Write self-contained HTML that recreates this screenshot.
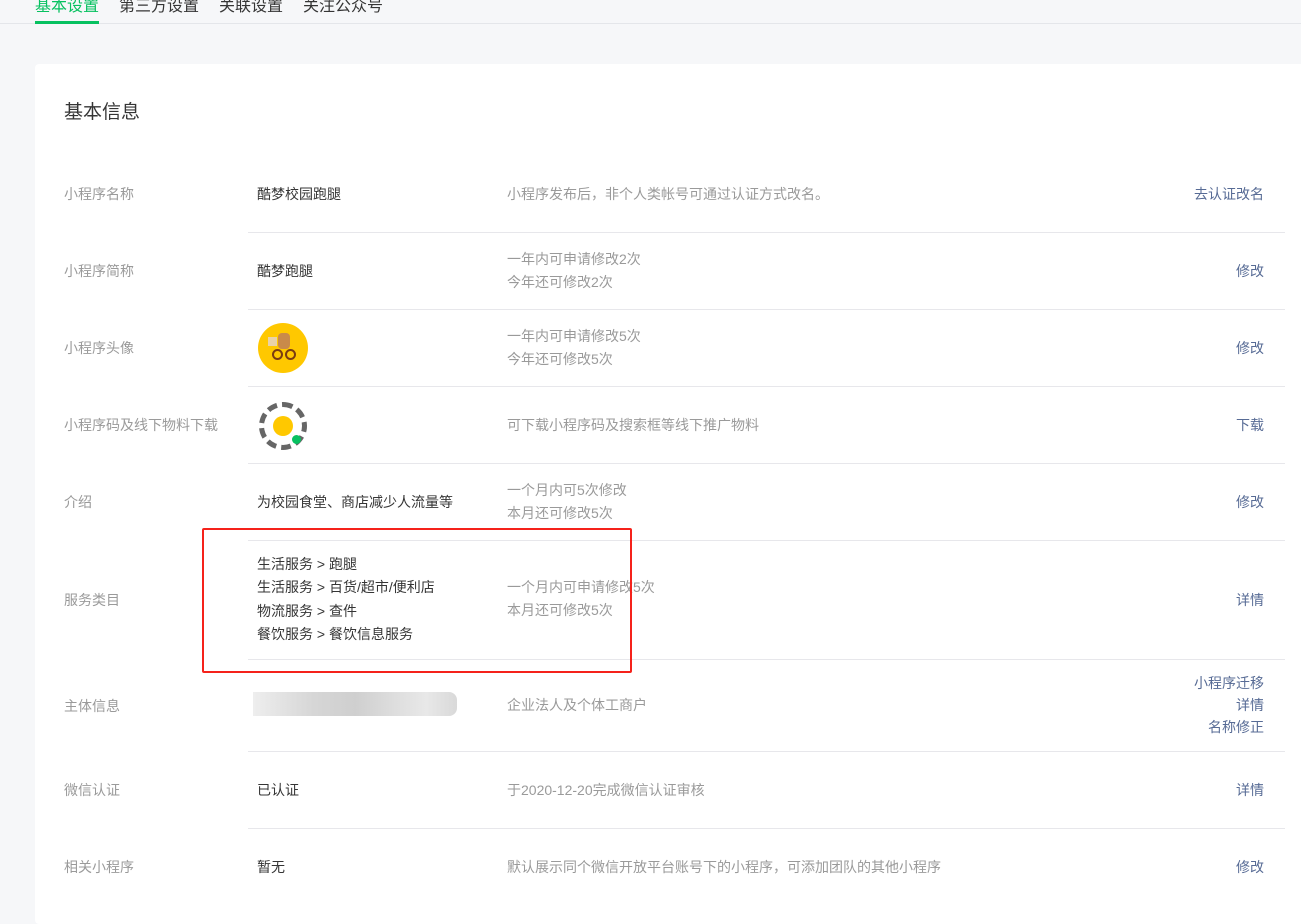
<!DOCTYPE html>
<html><head><meta charset="utf-8"><style>
*{margin:0;padding:0;box-sizing:border-box}
body{width:1301px;height:905px;overflow:hidden;background:#f6f7f9;font-family:"Liberation Sans","Noto Sans CJK SC",sans-serif;font-size:14px;position:relative}
.a{position:absolute;white-space:nowrap}
.tab{top:-4px;font-size:16px;color:#353535;line-height:22px}
.card{position:absolute;left:35px;top:64px;width:1280px;height:860px;background:#fff;border-radius:4px}
.lab{color:#9a9a9a;left:64px;margin-top:-2px}
.val{color:#353535;left:257px;margin-top:-2px}
.desc{color:#9a9a9a;left:507px;line-height:23px}
.lnk{color:#576b95;right:37px;text-align:right;line-height:22px}
.ln{position:absolute;left:248px;width:1037px;height:1px;background:#e7e7eb}
</style></head><body>
<div class="a tab" style="left:35px;color:#07c160">基本设置</div>
<div class="a tab" style="left:119px">第三方设置</div>
<div class="a tab" style="left:219px">关联设置</div>
<div class="a tab" style="left:303px">关注公众号</div>
<div style="position:absolute;left:0;top:23px;width:1301px;height:1px;background:#e4e6ea"></div>
<div style="position:absolute;left:35px;top:21px;width:64px;height:3px;background:#07c160"></div>
<div class="card"></div>
<div class="a" style="left:64px;top:97px;font-size:19px;color:#353535">基本信息</div>

<div class="a lab" style="top:186px">小程序名称</div>
<div class="a val" style="top:186px">酷梦校园跑腿</div>
<div class="a desc" style="top:183px">小程序发布后，非个人类帐号可通过认证方式改名。</div>
<div class="a lnk" style="top:183px">去认证改名</div>
<div class="ln" style="top:232px"></div>

<div class="a lab" style="top:263px">小程序简称</div>
<div class="a val" style="top:263px">酷梦跑腿</div>
<div class="a desc" style="top:248px">一年内可申请修改2次<br>今年还可修改2次</div>
<div class="a lnk" style="top:260px">修改</div>
<div class="ln" style="top:309px"></div>

<div class="a lab" style="top:340px">小程序头像</div>
<div class="a" style="left:258px;top:323px;width:50px;height:50px;border-radius:50%;background:#ffc800;overflow:hidden">
<div style="position:absolute;left:14px;top:26px;width:11px;height:11px;border:2px solid #7a3b12;border-radius:50%"></div>
<div style="position:absolute;left:27px;top:26px;width:11px;height:11px;border:2px solid #7a3b12;border-radius:50%"></div>
<div style="position:absolute;left:20px;top:10px;width:12px;height:16px;background:#c98a4a;border-radius:4px"></div>
<div style="position:absolute;left:10px;top:14px;width:9px;height:9px;background:#e9d2a8"></div>
</div>
<div class="a desc" style="top:325px">一年内可申请修改5次<br>今年还可修改5次</div>
<div class="a lnk" style="top:337px">修改</div>
<div class="ln" style="top:386px"></div>

<div class="a lab" style="top:417px">小程序码及线下物料下载</div>
<div class="a" style="left:259px;top:402px;width:48px;height:48px;border-radius:50%;border:5px dashed #666;background:#fff"></div>
<div class="a" style="left:273px;top:416px;width:20px;height:20px;border-radius:50%;background:#ffc800"></div>
<div class="a" style="left:292px;top:435px;width:9px;height:9px;border-radius:50%;background:#07c160"></div>
<div class="a desc" style="top:414px">可下载小程序码及搜索框等线下推广物料</div>
<div class="a lnk" style="top:414px">下载</div>
<div class="ln" style="top:463px"></div>

<div class="a lab" style="top:494px">介绍</div>
<div class="a val" style="top:494px">为校园食堂、商店减少人流量等</div>
<div class="a desc" style="top:479px">一个月内可5次修改<br>本月还可修改5次</div>
<div class="a lnk" style="top:491px">修改</div>
<div class="ln" style="top:540px"></div>

<div class="a lab" style="top:592px">服务类目</div>
<div class="a val" style="top:555px;line-height:23.3px">生活服务 &gt; 跑腿<br>生活服务 &gt; 百货/超市/便利店<br>物流服务 &gt; 查件<br>餐饮服务 &gt; 餐饮信息服务</div>
<div class="a desc" style="top:576px">一个月内可申请修改5次<br>本月还可修改5次</div>
<div class="a lnk" style="top:589px">详情</div>
<div class="ln" style="top:659px"></div>
<div class="a" style="left:202px;top:528px;width:430px;height:145px;border:2px solid #f5221b;border-radius:2px"></div>

<div class="a lab" style="top:698px">主体信息</div>
<div class="a" style="left:253px;top:692px;width:204px;height:24px;border-radius:0 8px 8px 0;background:linear-gradient(90deg,#eee,#d6d6d6 30%,#cfcfcf 50%,#dedede 70%,#e8e8e8 85%,#d9d9d9)"></div>
<div class="a desc" style="top:694px">企业法人及个体工商户</div>
<div class="a lnk" style="top:672px">小程序迁移<br>详情<br>名称修正</div>
<div class="ln" style="top:751px"></div>

<div class="a lab" style="top:782px">微信认证</div>
<div class="a val" style="top:782px">已认证</div>
<div class="a desc" style="top:779px">于2020-12-20完成微信认证审核</div>
<div class="a lnk" style="top:779px">详情</div>
<div class="ln" style="top:828px"></div>

<div class="a lab" style="top:859px">相关小程序</div>
<div class="a val" style="top:859px">暂无</div>
<div class="a desc" style="top:856px">默认展示同个微信开放平台账号下的小程序，可添加团队的其他小程序</div>
<div class="a lnk" style="top:856px">修改</div>
</body></html>
